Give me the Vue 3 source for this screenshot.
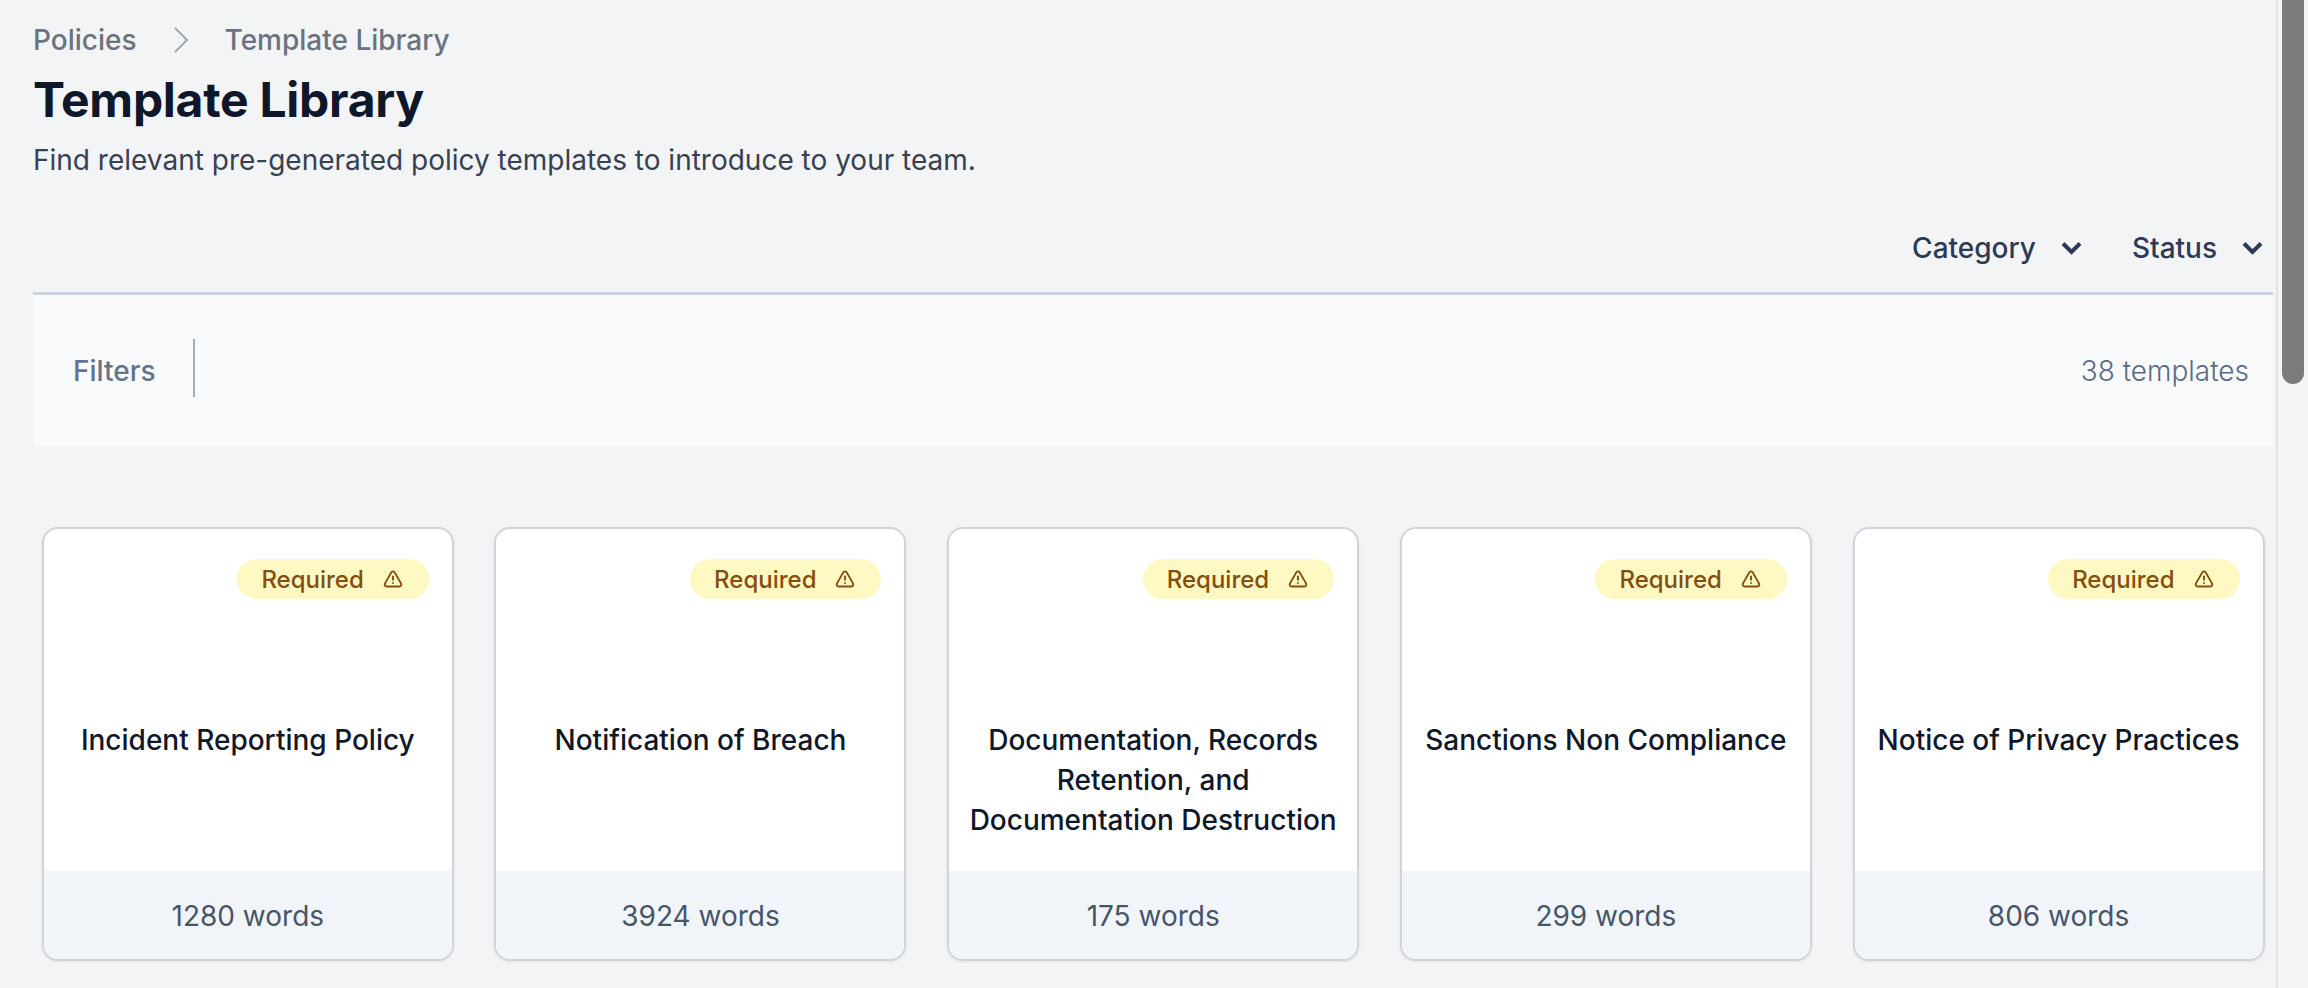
<script setup>
const cards = [
  { title: 'Incident Reporting Policy', words: 1280 },
  { title: 'Notification of Breach', words: 3924 },
  { title: 'Documentation, Records Retention, and Documentation Destruction', words: 175 },
  { title: 'Sanctions Non Compliance', words: 299 },
  { title: 'Notice of Privacy Practices', words: 806 },
]
</script>

<template>
  <div class="shell">
    <main class="page">
      <nav class="crumbs">
        <span>Policies</span>
        <svg class="crumb-sep" viewBox="0 0 16 28" fill="none" stroke="#9ca3af" stroke-width="2">
          <path d="M1.5 1 L14.5 14 L1.5 27" />
        </svg>
        <span>Template Library</span>
      </nav>
      <h1 class="heading">Template Library</h1>
      <p class="sub">Find relevant pre-generated policy templates to introduce to your team.</p>

      <div class="dropdowns">
        <button class="dd">
          <span>Category</span>
          <svg class="chev" viewBox="0 0 21 14" fill="none" stroke="#2d3a55" stroke-width="4">
            <path d="M2 2.5 L10.5 11 L19 2.5" />
          </svg>
        </button>
        <button class="dd">
          <span>Status</span>
          <svg class="chev" viewBox="0 0 21 14" fill="none" stroke="#2d3a55" stroke-width="4">
            <path d="M2 2.5 L10.5 11 L19 2.5" />
          </svg>
        </button>
      </div>

      <section class="filters">
        <div class="filters-label">Filters</div>
        <div class="count">38 templates</div>
      </section>

      <section class="grid">
        <article v-for="c in cards" :key="c.title" class="card">
          <div class="card-body">
            <div class="badge-row">
              <span class="badge">
                <span>Required</span>
                <svg class="warn" viewBox="0 0 20 20" fill="none" stroke="#854d0e" stroke-width="1.9" stroke-linejoin="round" stroke-linecap="round">
                  <path d="M8.3 3.4 Q10 1.4 11.7 3.4 L18 14.4 Q19 17.4 16.4 17.5 L3.6 17.5 Q1 17.4 2 14.4 Z" />
                  <path d="M10 7.5 V10.8" />
                  <path d="M10 14 V14.1" />
                </svg>
              </span>
            </div>
            <h2 class="title">{{ c.title }}</h2>
          </div>
          <div class="card-foot">{{ c.words }} words</div>
        </article>
      </section>
    </main>

    <aside class="scrollbar" aria-hidden="true">
      <div class="thumb"></div>
    </aside>
  </div>
</template>

<style>
html, body { margin: 0; height: 100%; overflow: hidden; background: #f3f4f6; }
</style>

<style scoped>
.shell {
  display: flex;
  width: 2308px;
  height: 988px;
  overflow: hidden;
  background: #f3f4f6;
  font-family: Inter, "Liberation Sans", sans-serif;
}
.page {
  width: 2240px;
  margin-left: 33px;
  margin-right: 3px;
  flex: none;
}
.crumbs {
  display: flex;
  align-items: center;
  height: 40px;
  margin-top: 20px;
  font-size: 28px;
  font-weight: 500;
  color: #6b7280;
  line-height: 40px;
}
.crumb-sep {
  width: 16px;
  height: 26px;
  margin: 0 36px;
}
.heading {
  margin: 10px 0 0;
  font-size: 48px;
  line-height: 60px;
  font-weight: 700;
  color: #0f172a;
  letter-spacing: -0.27px;
}
.sub {
  margin: 10px 0 0;
  font-size: 28px;
  line-height: 40px;
  color: #374151;
}
.dropdowns {
  display: flex;
  justify-content: flex-end;
  gap: 50px;
  height: 40px;
  margin-top: 48px;
  padding-right: 10px;
}
.dd {
  display: flex;
  align-items: center;
  gap: 25px;
  padding: 0;
  border: 0;
  background: none;
  font: inherit;
  font-size: 28px;
  font-weight: 500;
  line-height: 40px;
  color: #2d3a55;
}
.chev {
  width: 21px;
  height: 14px;
}
.filters {
  display: flex;
  align-items: center;
  justify-content: space-between;
  box-sizing: border-box;
  height: 154px;
  margin-top: 24px;
  padding: 0 24px 0 40px;
  background: #f8fafc;
  border-top: 3px solid #cbd5e1;
}
.filters-label {
  display: flex;
  align-items: center;
  box-sizing: border-box;
  height: 58px;
  margin-bottom: 6px;
  padding: 6px 37px 0 0;
  border-right: 2px solid #a3adba;
  font-size: 28px;
  font-weight: 500;
  color: #64748b;
}
.count {
  font-size: 28px;
  font-weight: 300;
  color: #5b6b83;
}
.grid {
  display: flex;
  gap: 40.7px;
  margin-top: 81px;
  padding: 0 8.8px;
}
.card {
  flex: none;
  width: 412px;
  height: 434px;
  box-sizing: border-box;
  display: flex;
  flex-direction: column;
  overflow: hidden;
  background: #fff;
  border: 2px solid #d1d5db;
  border-radius: 16px;
  box-shadow: 0 1px 3px rgba(0, 0, 0, 0.08);
}
.card-body {
  flex: 1;
  min-height: 0;
  padding: 30px 0 0;
}
.badge-row {
  display: flex;
  justify-content: flex-end;
  padding-right: 23px;
}
.badge {
  display: inline-flex;
  align-items: center;
  gap: 19px;
  height: 40px;
  padding: 0 26px 0 24px;
  border-radius: 20px;
  background: #fef9c3;
  color: #854d0e;
  font-size: 24px;
  font-weight: 500;
}
.warn {
  width: 20px;
  height: 20px;
}
.title {
  margin: 121px 0 0;
  padding: 0 14px;
  text-align: center;
  font-size: 28px;
  line-height: 40px;
  font-weight: 500;
  color: #0f172a;
}
.card-foot {
  height: 88px;
  flex: none;
  box-sizing: border-box;
  padding-top: 2px;
  display: flex;
  align-items: center;
  justify-content: center;
  background: #f1f5fa;
  font-size: 28px;
  color: #475569;
}
.scrollbar {
  position: absolute;
  left: 2276px;
  top: 0;
  width: 32px;
  height: 988px;
  box-sizing: border-box;
  background: #f5f5f5;
  border-left: 2px solid #e2e2e2;
}
.thumb {
  width: 22px;
  height: 384px;
  margin-left: 4px;
  background: #7c7c7c;
  border-radius: 0 0 11px 11px;
}
</style>
